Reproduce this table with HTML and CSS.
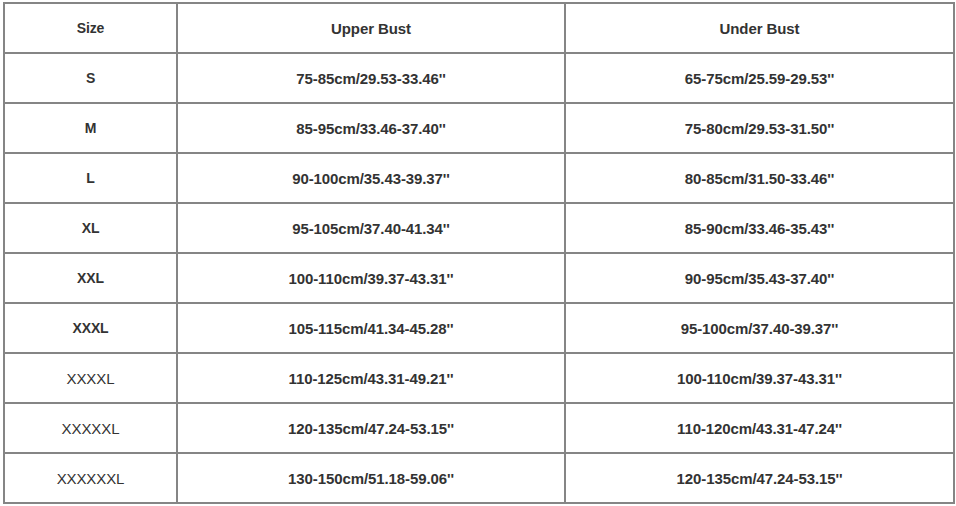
FILE: index.html
```html
<!DOCTYPE html>
<html>
<head>
<meta charset="utf-8">
<link rel="stylesheet" href="styles.css">
</head>
<body>
<table class="size-table">
  <colgroup>
    <col class="col-size">
    <col class="col-upper">
    <col class="col-under">
  </colgroup>
  <tr class="head"><td class="first">Size</td><td>Upper Bust</td><td>Under Bust</td></tr>
  <tr><td class="sz b">S</td><td>75-85cm/29.53-33.46''</td><td>65-75cm/25.59-29.53''</td></tr>
  <tr><td class="sz b">M</td><td>85-95cm/33.46-37.40''</td><td>75-80cm/29.53-31.50''</td></tr>
  <tr><td class="sz b">L</td><td>90-100cm/35.43-39.37''</td><td>80-85cm/31.50-33.46''</td></tr>
  <tr><td class="sz b">XL</td><td>95-105cm/37.40-41.34''</td><td>85-90cm/33.46-35.43''</td></tr>
  <tr><td class="sz b">XXL</td><td>100-110cm/39.37-43.31''</td><td>90-95cm/35.43-37.40''</td></tr>
  <tr><td class="sz b">XXXL</td><td>105-115cm/41.34-45.28''</td><td>95-100cm/37.40-39.37''</td></tr>
  <tr><td class="sz">XXXXL</td><td>110-125cm/43.31-49.21''</td><td>100-110cm/39.37-43.31''</td></tr>
  <tr><td class="sz">XXXXXL</td><td>120-135cm/47.24-53.15''</td><td>110-120cm/43.31-47.24''</td></tr>
  <tr><td class="sz">XXXXXXL</td><td>130-150cm/51.18-59.06''</td><td>120-135cm/47.24-53.15''</td></tr>
</table>
</body>
</html>
```
FILE: styles.css
```css
html, body {
  margin: 0;
  padding: 0;
  background: #ffffff;
}
body {
  padding: 2px 0 0 3px;
  font-family: "Liberation Sans", Arial, sans-serif;
  color: #333333;
}
.size-table {
  border-collapse: collapse;
  table-layout: fixed;
  width: 950px;
}
.col-size { width: 173px; }
.col-upper { width: 388px; }
.col-under { width: 389px; }
.size-table td {
  border: 2px solid #858585;
  height: 48px;
  padding: 0;
  text-align: center;
  vertical-align: middle;
  font-size: 15px;
  font-weight: bold;
  letter-spacing: -0.1px;
}
.head td {
  color: #333;
}
.head td.first {
  font-size: 14px;
}
.size-table td.sz {
  font-weight: normal;
}
.size-table td.sz.b {
  font-weight: bold;
  font-size: 14px;
}
```
